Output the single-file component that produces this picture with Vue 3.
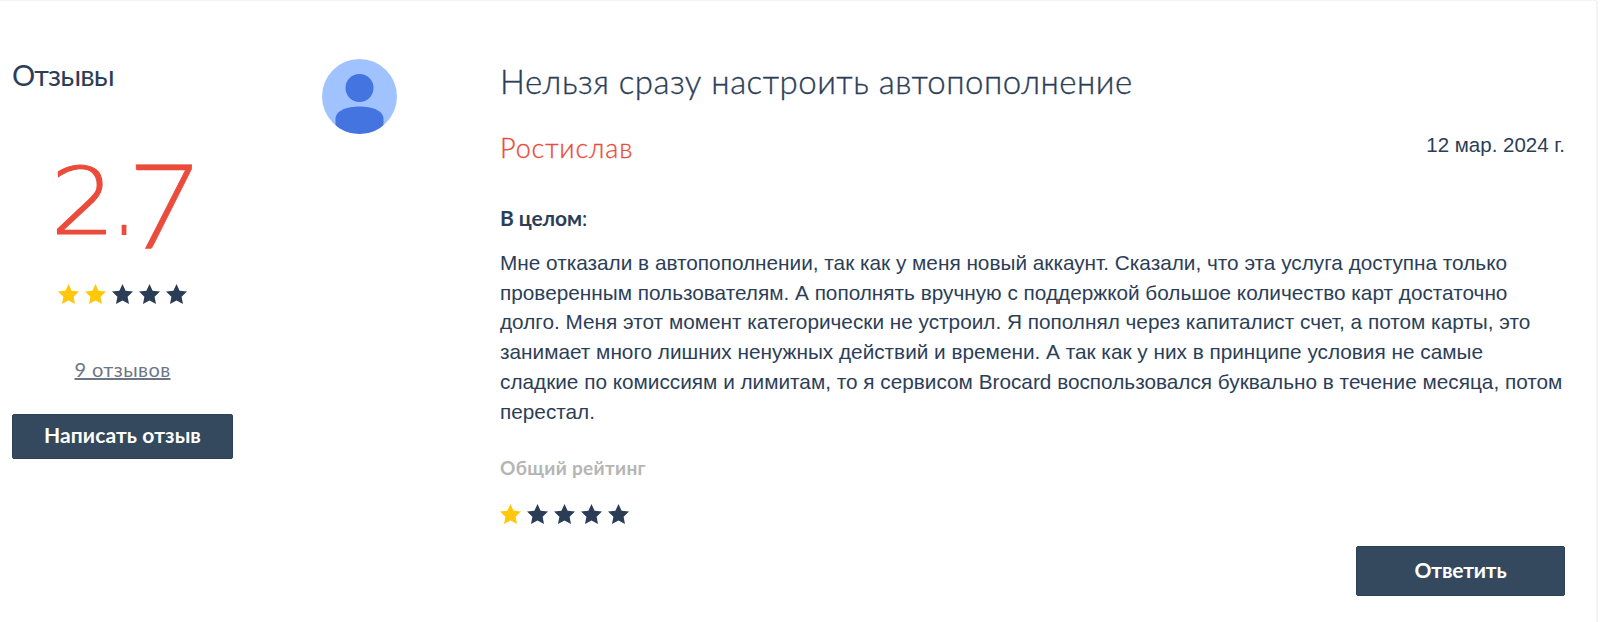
<template>
  <div class="review-card">
    <aside class="summary">
      <h2 class="summary-title">Отзывы</h2>
      <div class="score"><span class="two">2</span><span class="dot">.</span><span class="seven">7</span></div>
      <div class="stars summary-stars">
        <svg v-for="n in 5" :key="n" class="star" :class="{ active: n <= 2 }" viewBox="0 0 21 20">
          <path :d="starPath" />
        </svg>
      </div>
      <a class="count">9 отзывов</a>
      <button class="btn btn-write">Написать отзыв</button>
    </aside>

    <svg class="avatar" viewBox="0 0 75 75">
      <defs>
        <clipPath id="avatarClip"><circle cx="37.5" cy="37.5" r="37.5" /></clipPath>
      </defs>
      <g clip-path="url(#avatarClip)">
        <rect width="75" height="75" fill="#a0c3ff" />
        <circle cx="37.5" cy="29" r="14" fill="#4374e0" />
        <path d="M13.5 80V60C13.5 51.500 25 47.500 37.500 47.500S61.500 51.500 61.500 60V80Z" fill="#4374e0" />
      </g>
    </svg>

    <article class="review">
      <h3 class="review-title">{{ review.title }}</h3>
      <div class="meta">
        <span class="author">{{ review.author }}</span>
        <span class="date">{{ review.date }}</span>
      </div>
      <div class="label"><b>В целом</b>:</div>
      <p class="text">{{ review.text }}</p>
      <div class="rating-label">Общий рейтинг</div>
      <div class="stars">
        <svg v-for="n in 5" :key="n" class="star" :class="{ active: n <= review.rating }" viewBox="0 0 21 20">
          <path :d="starPath" />
        </svg>
      </div>
      <button class="btn btn-reply">Ответить</button>
    </article>
  </div>
</template>

<script setup>
import { ref } from 'vue'

const starPath = 'M10.500 0L13.600 6.700L21 7.600L15.600 12.700L17 20L10.500 16.400L4 20L5.400 12.700L0 7.600L7.400 6.700Z'

const review = ref({
  title: 'Нельзя сразу настроить автопополнение',
  author: 'Ростислав',
  date: '12 мар. 2024 г.',
  rating: 1,
  text: [
    'Мне отказали в автопополнении, так как у меня новый аккаунт. Сказали, что эта услуга доступна только',
    'проверенным пользователям. А пополнять вручную с поддержкой большое количество карт достаточно',
    'долго. Меня этот момент категорически не устроил. Я пополнял через капиталист счет, а потом карты, это',
    'занимает много лишних ненужных действий и времени. А так как у них в принципе условия не самые',
    'сладкие по комиссиям и лимитам, то я сервисом Brocard воспользовался буквально в течение месяца, потом',
    'перестал.'
  ].join('\n')
})
</script>

<style>
body {
  background: #fff;
}
</style>

<style scoped>
.review-card {
  box-sizing: border-box;
  width: 1598px;
  height: 622px;
  padding: 58px 31px 0 12px;
  border-top: 1px solid #f3f3f3;
  border-right: 2px solid #f3f3f3;
  border-top-right-radius: 3px;
  display: grid;
  grid-template-columns: 310px 178px 1fr;
  align-items: start;
  font-family: Lato, 'Liberation Sans', sans-serif;
  color: #2c3e57;
}
.summary {
  width: 221px;
  display: flex;
  flex-direction: column;
  align-items: center;
}
.summary-title {
  align-self: flex-start;
  margin: 0;
  font-size: 29px;
  font-weight: 400;
  line-height: 32px;
  letter-spacing: -0.9px;
}
.score {
  width: 136px;
  height: 100px;
  margin: 52px 0 0 5px;
  display: flex;
  font-family: 'DejaVu Sans', 'DejaVu Sans Light', sans-serif;
  font-size: 93px;
  font-weight: 200;
  line-height: 112px;
  color: #eb4b3b;
  -webkit-text-stroke: 1.2px currentColor;
}
.score span {
  display: flex;
  justify-content: center;
}
.two {
  width: 52px;
  margin-top: 3px;
  transform: scaleX(1.1);
}
.score .dot {
  width: 30px;
  margin: 20px -5px 0 0;
  font-size: 46px;
  font-weight: 400;
  -webkit-text-stroke: 0;
  transform: scaleY(1.8);
  transform-origin: 50% 72px;
}
.score .seven {
  width: 58px;
  margin-top: 5px;
  font-family: Lato, sans-serif;
  font-size: 118px;
  font-weight: 300;
  -webkit-text-stroke: 0.6px currentColor;
}
.summary-stars {
  margin-top: 41px;
}
.stars {
  display: flex;
  gap: 6px;
}
.star {
  width: 21px;
  height: 20px;
  fill: #2b3c57;
}
.star.active {
  fill: #ffc80a;
}
.count {
  margin-top: 52px;
  font-size: 20px;
  line-height: 26px;
  letter-spacing: 0.4px;
  color: #6b7686;
  text-decoration: underline;
}
.btn {
  border: 1px solid #2c4059;
  border-radius: 2px;
  background: #34495e;
  padding: 0;
  font-family: inherit;
  font-size: 21px;
  font-weight: 700;
  color: #fff;
}
.btn-write {
  width: 221px;
  height: 45px;
  margin-top: 32px;
  padding-bottom: 5px;
  letter-spacing: 0.1px;
}
.avatar {
  width: 75px;
  height: 75px;
}
.review {
  display: flex;
  flex-direction: column;
}
.review-title {
  margin: 2px 0 0;
  font-size: 33px;
  font-weight: 300;
  line-height: 40px;
  letter-spacing: 0.5px;
  -webkit-text-stroke: 0.35px currentColor;
}
.meta {
  margin-top: 27px;
  display: flex;
  justify-content: space-between;
}
.author {
  font-size: 27px;
  font-weight: 300;
  line-height: 40px;
  letter-spacing: 0.85px;
  -webkit-text-stroke: 0.3px currentColor;
  color: #eb4b3b;
}
.date {
  font-family: 'Liberation Sans', sans-serif;
  font-size: 20.5px;
  line-height: 34px;
}
.label {
  margin-top: 36px;
  font-size: 21px;
  line-height: 28px;
  letter-spacing: -0.1px;
}
.text {
  margin: 16px 0 0;
  font-family: 'Liberation Sans', sans-serif;
  font-size: 20.78px;
  line-height: 29.7px;
  white-space: pre;
}
.rating-label {
  margin-top: 29px;
  font-size: 19px;
  font-weight: 700;
  line-height: 26px;
  letter-spacing: 0.32px;
  color: #b5b5b5;
}
.review .stars {
  margin-top: 23px;
}
.btn-reply {
  align-self: flex-end;
  width: 209px;
  height: 50px;
  margin-top: 22px;
  padding-bottom: 4px;
  letter-spacing: -0.2px;
}
</style>
